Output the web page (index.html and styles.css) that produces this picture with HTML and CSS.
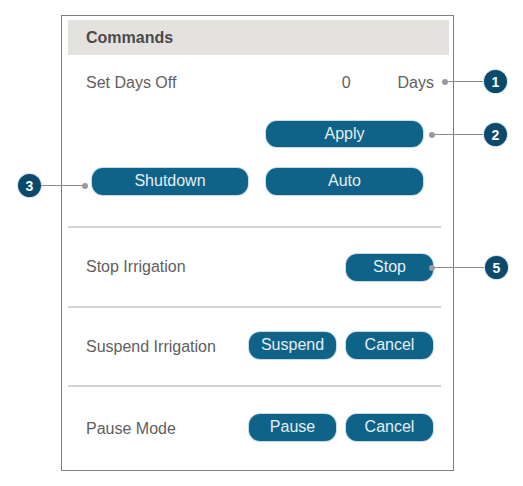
FILE: index.html
```html
<!DOCTYPE html>
<html>
<head>
<meta charset="utf-8">
<link rel="stylesheet" href="styles.css">
</head>
<body>
<div class="page">
  <div class="panel">
    <div class="panel-header">Commands</div>

    <div class="row-days">
      <span class="label">Set Days Off</span>
      <span class="value">0</span>
      <span class="unit">Days</span>
    </div>
    <div class="row-apply">
      <button class="btn btn-wide">Apply</button>
    </div>
    <div class="row-mode">
      <button class="btn btn-shutdown">Shutdown</button>
      <button class="btn btn-wide">Auto</button>
    </div>
    <div class="sep sep-first"></div>

    <div class="section section-stop">
      <span class="label">Stop Irrigation</span>
      <button class="btn btn-small">Stop</button>
    </div>
    <div class="sep"></div>

    <div class="section section-suspend">
      <span class="label">Suspend Irrigation</span>
      <div class="btns">
        <button class="btn btn-small">Suspend</button>
        <button class="btn btn-small">Cancel</button>
      </div>
    </div>
    <div class="sep"></div>

    <div class="section section-pause">
      <span class="label">Pause Mode</span>
      <div class="btns">
        <button class="btn btn-small">Pause</button>
        <button class="btn btn-small">Cancel</button>
      </div>
    </div>
  </div>

  <div class="callout callout-1"><span class="dot"></span><span class="line"></span><span class="num">1</span></div>
  <div class="callout callout-2"><span class="dot"></span><span class="line"></span><span class="num">2</span></div>
  <div class="callout callout-3"><span class="num">3</span><span class="line"></span><span class="dot"></span></div>
  <div class="callout callout-5"><span class="dot"></span><span class="line"></span><span class="num">5</span></div>
</div>
</body>
</html>
```

FILE: styles.css
```css
* { box-sizing: border-box; }

html, body {
  margin: 0;
  padding: 0;
  background: #ffffff;
}

body {
  font-family: "Liberation Sans", Arial, sans-serif;
  color: #5a5a5a;
}

.page {
  position: relative;
  width: 523px;
  height: 486px;
  padding: 15px 0 0 61px;
}

.panel {
  width: 393px;
  height: 456px;
  border: 1px solid #7f7f7f;
  display: flex;
  flex-direction: column;
}

.panel-header {
  margin: 4px 4px 0 6px;
  height: 35px;
  background: #e4e2df;
  display: flex;
  align-items: center;
  padding-left: 18px;
  font-weight: bold;
  font-size: 16px;
  color: #4a4a4a;
}

.label {
  font-size: 16px;
  color: #606060;
}

.row-days {
  height: 56px;
  display: flex;
  align-items: center;
  padding: 0 19px 0 24px;
  font-size: 16px;
}
.row-days .label { flex: 1; }
.row-days .value { margin-right: 47px; color: #606060; }
.row-days .unit { color: #606060; }

.row-apply {
  margin-top: 10px;
  display: flex;
  justify-content: flex-end;
  padding-right: 30px;
}

.row-mode {
  margin-top: 21px;
  display: flex;
  gap: 18px;
  padding-left: 30px;
}

.btn {
  font-family: "Liberation Sans", Arial, sans-serif;
  font-size: 16px;
  color: #e6eef3;
  background: #0f6389;
  border: none;
  border-radius: 11px;
  box-shadow: 0 0 0 1px #c9dbe5;
  padding: 0 0 1px 0;
  margin: 0;
  display: flex;
  align-items: center;
  justify-content: center;
  line-height: 1;
}

.row-apply .btn { height: 26px; }
.row-mode .btn { height: 27px; }
.btn-wide { width: 157px; }
.btn-shutdown { width: 156px; }
.btn-small { width: 87px; height: 27px; }

.sep {
  height: 2px;
  background: #d3d3d3;
  margin: 0 12px 0 6px;
}
.sep-first { margin-top: 31px; }

.section {
  display: flex;
  align-items: center;
  justify-content: space-between;
  padding: 0 20px 0 24px;
}
.section-stop { height: 78px; }
.section-suspend { height: 77px; }
.section-pause { height: 83px; }

.section-suspend .btns { margin-top: -3px; }
.section-pause .btns { margin-top: -2px; }

.btns {
  display: flex;
  gap: 10px;
}

/* callout annotations */
.callout {
  position: absolute;
  height: 23px;
  display: flex;
  align-items: center;
}
.callout .dot {
  width: 6px;
  height: 6px;
  border-radius: 50%;
  background: #9a9a9a;
  flex: none;
}
.callout .line {
  flex: 1;
  height: 1px;
  background: #8a8a8a;
}
.callout .num {
  flex: none;
  width: 23px;
  height: 23px;
  border-radius: 50%;
  background: #0c4a6c;
  box-shadow: 0 0 0 1px #d2e2ec;
  color: #ffffff;
  font-weight: bold;
  font-size: 14px;
  display: flex;
  align-items: center;
  justify-content: center;
}

.callout-1 { left: 442px; top: 70px; width: 65px; }
.callout-2 { left: 429px; top: 123px; width: 78px; }
.callout-3 { left: 18px; top: 174px; width: 70px; }
.callout-5 { left: 429px; top: 256px; width: 79px; }
```
